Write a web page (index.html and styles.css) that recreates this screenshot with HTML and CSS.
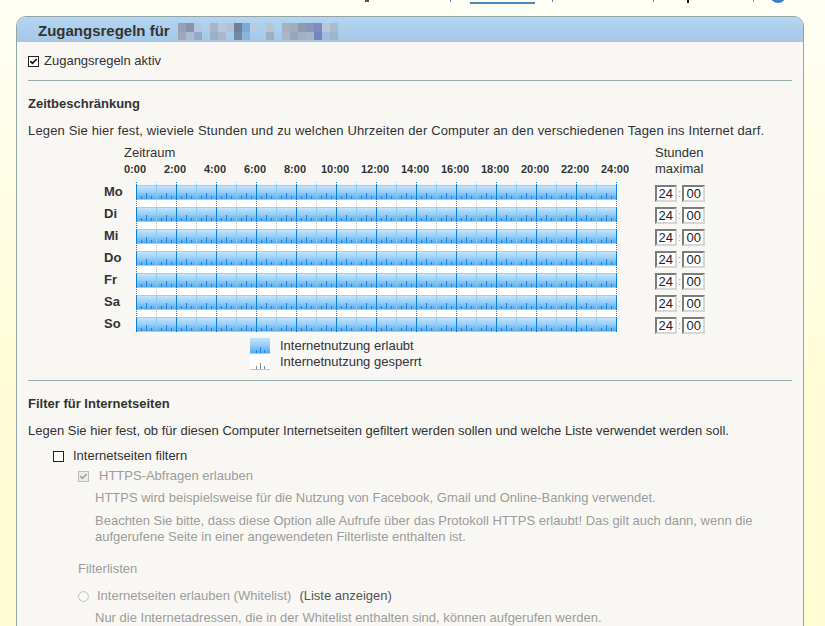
FILE: index.html
```html
<!DOCTYPE html>
<html lang="de">
<head>
<meta charset="utf-8">
<title>Zugangsregeln</title>
<link rel="stylesheet" href="styles.css">
</head>
<body>
<div class="topnav">
  <span class="tn tn-g"></span>
  <span class="tn tn-a"></span>
  <span class="tn tn-ul"></span>
  <span class="tn tn-b"></span>
  <span class="tn tn-c"></span>
  <span class="tn tn-y"></span>
  <span class="tn tn-d"></span>
  <span class="tn tn-circle"></span>
</div>

<div class="panel">
  <div class="panel-head">
    <h1 class="panel-title">Zugangsregeln für</h1>
    <svg class="mosaic" width="168" height="17" viewBox="0 0 168 17" aria-hidden="true">
      <rect x="3" y="0" width="8" height="9" fill="#98a0b4"/>
      <rect x="11" y="0" width="8" height="9" fill="#8a93aa"/>
      <rect x="19" y="0" width="8" height="9" fill="#b2c8e0"/>
      <rect x="35" y="0" width="8" height="9" fill="#a6b6c8"/>
      <rect x="43" y="0" width="8" height="9" fill="#b9c9d9"/>
      <rect x="51" y="0" width="8" height="9" fill="#b0c4d8"/>
      <rect x="59" y="0" width="8" height="9" fill="#6f8098"/>
      <rect x="67" y="0" width="8" height="9" fill="#7ea8d6"/>
      <rect x="75" y="0" width="8" height="9" fill="#b8cce0"/>
      <rect x="91" y="0" width="8" height="9" fill="#b4c6d6"/>
      <rect x="107" y="0" width="8" height="9" fill="#a2b2c2"/>
      <rect x="115" y="0" width="8" height="9" fill="#a0adbc"/>
      <rect x="123" y="0" width="8" height="9" fill="#8e9aae"/>
      <rect x="131" y="0" width="8" height="9" fill="#8a94b8"/>
      <rect x="139" y="0" width="8" height="9" fill="#7d8cc0"/>
      <rect x="147" y="0" width="8" height="9" fill="#b8c8dc"/>
      <rect x="155" y="0" width="8" height="9" fill="#a8bcd0"/>
      <rect x="3" y="9" width="8" height="8" fill="#a0a8b8"/>
      <rect x="11" y="9" width="8" height="8" fill="#b0bccc"/>
      <rect x="19" y="9" width="8" height="8" fill="#92a8cc"/>
      <rect x="35" y="9" width="8" height="8" fill="#9cb0c4"/>
      <rect x="43" y="9" width="8" height="8" fill="#a8b8c8"/>
      <rect x="59" y="9" width="8" height="8" fill="#7488a0"/>
      <rect x="67" y="9" width="8" height="8" fill="#8ab4dc"/>
      <rect x="91" y="9" width="8" height="8" fill="#9cb0c0"/>
      <rect x="107" y="9" width="8" height="8" fill="#a8b8c8"/>
      <rect x="115" y="9" width="8" height="8" fill="#98a8b8"/>
      <rect x="123" y="9" width="8" height="8" fill="#a4b0c0"/>
      <rect x="131" y="9" width="8" height="8" fill="#a8b4c8"/>
      <rect x="139" y="9" width="8" height="8" fill="#7484bc"/>
      <rect x="147" y="9" width="8" height="8" fill="#a4bcd8"/>
      <rect x="155" y="9" width="8" height="8" fill="#9cb4cc"/>
    </svg>
  </div>

  <div class="panel-body">
    <div class="check-row active-row">
      <svg class="cb" width="11" height="11" viewBox="0 0 11 11"><rect x="0.5" y="0.5" width="10" height="10" fill="#fff" stroke="#222"/><path d="M2.3 5.2 L4.4 7.4 L8.7 3" fill="none" stroke="#111" stroke-width="1.7"/></svg>
      <span>Zugangsregeln aktiv</span>
    </div>

    <hr class="sep">

    <h2 class="section-title">Zeitbeschränkung</h2>
    <p class="desc desc-time">Legen Sie hier fest, wieviele Stunden und zu welchen Uhrzeiten der Computer an den verschiedenen Tagen ins Internet darf.</p>

    <div class="schedule">
      <div class="sched-main">
        <div class="zeitraum">Zeitraum</div>
        <div class="hours">
          <span>0:00</span><span>2:00</span><span>4:00</span><span>6:00</span><span>8:00</span><span>10:00</span><span>12:00</span><span>14:00</span><span>16:00</span><span>18:00</span><span>20:00</span><span>22:00</span><span>24:00</span>
        </div>
        <div class="grid-area">
          <div class="days">
            <span>Mo</span><span>Di</span><span>Mi</span><span>Do</span><span>Fr</span><span>Sa</span><span>So</span>
          </div>
          <svg class="timegrid" width="482" height="151" viewBox="0 0 482 151">
            <defs>
              <linearGradient id="blue" x1="0" y1="0" x2="0" y2="1">
                <stop offset="0" stop-color="#c6e4fb"/>
                <stop offset="0.45" stop-color="#9ad0f8"/>
                <stop offset="1" stop-color="#55abef"/>
              </linearGradient>
              <pattern id="row" x="0" y="4" width="40" height="22" patternUnits="userSpaceOnUse">
                <rect x="0" y="0" width="40" height="1" fill="#c4c4c4"/>
                <rect x="0" y="1" width="40" height="13" fill="url(#blue)"/>
                <rect x="0" y="14" width="40" height="1" fill="#c4c4c4"/>
                <rect x="0" y="15" width="40" height="7" fill="#ffffff"/>
                <rect x="1" y="0" width="1" height="15" fill="#0a7fe2"/>
                <rect x="21" y="0" width="1" height="15" fill="#88caf6"/>
                <path d="M6 11h1v3h-1z M11 8h1v6h-1z M16 11h1v3h-1z M26 11h1v3h-1z M31 8h1v6h-1z M36 11h1v3h-1z" fill="#1a86e2"/>
                <path d="M1 16h1v1h-1z M1 18h1v1h-1z M1 20h1v1h-1z" fill="#0a7fe2"/>
                <path d="M21 16h1v1h-1z M21 18h1v1h-1z M21 20h1v1h-1z" fill="#88caf6"/>
              </pattern>
              <pattern id="dots" x="0" y="0" width="40" height="2" patternUnits="userSpaceOnUse">
                <rect x="1" y="1" width="1" height="1" fill="#0a7fe2"/>
                <rect x="21" y="1" width="1" height="1" fill="#88caf6"/>
              </pattern>
            </defs>
            <rect x="1" y="0" width="481" height="4" fill="url(#dots)"/>
            <rect x="1" y="4" width="481" height="147" fill="url(#row)"/>
          </svg>
        </div>
        <div class="legend">
          <div class="legend-row">
            <svg class="swatch" width="20" height="16" viewBox="0 0 20 16"><rect x="0" y="0" width="20" height="15" fill="url(#blue)"/><rect x="0" y="15" width="20" height="1" fill="#c4c4c4"/><path d="M6 12h1v3h-1z M10 9h1v6h-1z M14 12h1v3h-1z" fill="#1a86e2"/></svg>
            <span>Internetnutzung erlaubt</span>
          </div>
          <div class="legend-row">
            <svg class="swatch" width="20" height="16" viewBox="0 0 20 16"><rect x="0" y="0" width="20" height="15" fill="#fff"/><rect x="0" y="15" width="20" height="1" fill="#c4c4c4"/><path d="M6 12h1v3h-1z M10 9h1v6h-1z M14 12h1v3h-1z" fill="#7a8a98"/></svg>
            <span>Internetnutzung gesperrt</span>
          </div>
        </div>
      </div>

      <div class="sched-max">
        <div class="max-head">Stunden<br>maximal</div>
        <div class="max-rows">
          <div class="max-row"><span class="tbox">24</span><span class="colon">:</span><span class="tbox min">00</span></div>
          <div class="max-row"><span class="tbox">24</span><span class="colon">:</span><span class="tbox min">00</span></div>
          <div class="max-row"><span class="tbox">24</span><span class="colon">:</span><span class="tbox min">00</span></div>
          <div class="max-row"><span class="tbox">24</span><span class="colon">:</span><span class="tbox min">00</span></div>
          <div class="max-row"><span class="tbox">24</span><span class="colon">:</span><span class="tbox min">00</span></div>
          <div class="max-row"><span class="tbox">24</span><span class="colon">:</span><span class="tbox min">00</span></div>
          <div class="max-row"><span class="tbox">24</span><span class="colon">:</span><span class="tbox min">00</span></div>
        </div>
      </div>
    </div>

    <hr class="sep sep-legend">

    <h2 class="section-title">Filter für Internetseiten</h2>
    <p class="desc">Legen Sie hier fest, ob für diesen Computer Internetseiten gefiltert werden sollen und welche Liste verwendet werden soll.</p>

    <div class="check-row filter-row">
      <svg class="cb" width="11" height="11" viewBox="0 0 11 11"><rect x="0.5" y="0.5" width="10" height="10" fill="#fff" stroke="#222"/></svg>
      <span>Internetseiten filtern</span>
    </div>
    <div class="check-row https-row disabled">
      <svg class="cb" width="11" height="11" viewBox="0 0 11 11"><rect x="0.5" y="0.5" width="10" height="10" fill="#ececec" stroke="#bcbcbc"/><path d="M2.3 5.2 L4.4 7.4 L8.7 3" fill="none" stroke="#a4a4a4" stroke-width="1.7"/></svg>
      <span>HTTPS-Abfragen erlauben</span>
    </div>
    <p class="note note-first">HTTPS wird beispielsweise für die Nutzung von Facebook, Gmail und Online-Banking verwendet.</p>
    <p class="note note-warn">Beachten Sie bitte, dass diese Option alle Aufrufe über das Protokoll HTTPS erlaubt! Das gilt auch dann, wenn die aufgerufene Seite in einer angewendeten Filterliste enthalten ist.</p>
    <p class="sub">Filterlisten</p>
    <div class="radio-row">
      <svg class="rb" width="11" height="11" viewBox="0 0 11 11"><circle cx="5.5" cy="5.5" r="5" fill="#f2f2f2" stroke="#c4c4c4"/><circle cx="5.5" cy="5.5" r="3.5" fill="#fafafa"/></svg>
      <span class="radio-label">Internetseiten erlauben (Whitelist)</span>
      <span class="list-link">(Liste anzeigen)</span>
    </div>
    <p class="note note-radio">Nur die Internetadressen, die in der Whitelist enthalten sind, können aufgerufen werden.</p>
  </div>
</div>
</body>
</html>
```

FILE: styles.css
```css
* { box-sizing: border-box; }

html {
  background: linear-gradient(#fffff4 0, #fffee6 180px, #fffcd8 380px, #fffbd3 626px);
  min-height: 100%;
}

body {
  margin: 0;
  font-family: "Liberation Sans", Arial, sans-serif;
  font-size: 13px;
  color: #333;
  height: 626px;
  overflow: hidden;
}

/* fragments of the navigation above */
.topnav {
  display: flex;
  align-items: flex-start;
  height: 4px;
  overflow: hidden;
  margin-bottom: 12px;
}
.tn { display: block; flex: none; }
.tn-g { margin-left: 365px; width: 4px; height: 2px; background: #555; }
.tn-a { margin-left: 81px; width: 1px; height: 2px; background: #4d8ad0; }
.tn-ul { margin-left: 19px; margin-top: 2px; width: 65px; height: 2px; background: #4a86c8; }
.tn-b { margin-left: 17px; width: 1px; height: 2px; background: #4d8ad0; }
.tn-c { margin-left: 100px; width: 1px; height: 2px; background: #4d8ad0; }
.tn-y { margin-left: 33px; width: 2px; height: 3px; background: #111; }
.tn-d { margin-left: 64px; width: 1px; height: 2px; background: #4d8ad0; }
.tn-circle { margin-left: 16px; margin-top: -13px; width: 16px; height: 16px; border-radius: 50%; background: #3d7fcc; }

/* panel */
.panel {
  margin-left: 16px;
  width: 788px;
  border: 1px solid #93a6a6;
  border-radius: 10px 10px 0 0;
  background: #f8f7f3;
}

.panel-head {
  display: flex;
  align-items: flex-start;
  height: 25px;
  padding-left: 21px;
  border-radius: 9px 9px 0 0;
  background: linear-gradient(#b4d6f2, #a5c7e7);
}

.panel-title {
  margin: 0;
  padding-top: 2px;
  font-size: 15px;
  font-weight: bold;
  line-height: 23px;
  color: #333;
}

.mosaic { display: block; margin: 6px 0 0 5px; }

.panel-body { padding: 11px 11px 40px; }

.check-row {
  display: flex;
  align-items: center;
  height: 16px;
  line-height: 16px;
}
.cb, .rb { display: block; flex: none; }
.active-row .cb { margin-right: 5px; }

.sep {
  border: 0;
  border-top: 1px solid #92adad;
  height: 0;
  margin: 11px 0 0;
}
.sep-legend { margin-top: 10px; }

.section-title {
  margin: 15px 0 0;
  font-size: 13px;
  font-weight: bold;
  line-height: 16px;
  color: #333;
}

.desc { margin: 11px 0 0; line-height: 16px; }
.desc-time { letter-spacing: 0.15px; }

/* schedule */
.schedule { display: flex; align-items: flex-start; margin: 6px 0 0 76px; }
.sched-main { width: 551px; flex: none; }
.zeitraum { padding-left: 20px; line-height: 16px; }

.hours {
  display: flex;
  margin: 2px 0 0 11px;
  font-size: 11px;
  font-weight: bold;
  line-height: 13px;
}
.hours span { width: 40px; text-align: center; flex: none; }

.grid-area { display: flex; align-items: flex-start; height: 151px; margin-top: 5px; }
.days { width: 31px; height: 151px; flex: none; padding-top: 4px; font-weight: bold; overflow: hidden; }
.days span { display: block; height: 22px; line-height: 14px; }
.timegrid { display: block; }

.legend { margin: 6px 0 0 146px; }
.legend-row {
  display: flex;
  align-items: center;
  gap: 10px;
  height: 16px;
  line-height: 16px;
}
.swatch { display: block; }

.max-head { line-height: 16px; }
.max-rows { margin-top: 8px; }
.max-row { display: flex; align-items: flex-start; height: 22px; }
.tbox {
  display: block;
  width: 22px;
  height: 17px;
  border: 2px solid;
  border-color: #7c7c7c #d6d6d6 #d6d6d6 #7c7c7c;
  background: #fff;
  padding-right: 2px;
  text-align: right;
  font-size: 13px;
  line-height: 13px;
  color: #222;
}
.tbox.min { width: 23px; }
.colon {
  display: block;
  width: 5px;
  text-align: center;
  font-size: 11px;
  line-height: 17px;
  color: #c0a684;
}

/* filter */
.filter-row { margin: 9px 0 0 25px; gap: 9px; }
.https-row { margin: 4px 0 0 50px; gap: 10px; }
.disabled { color: #9c9c9c; }

.note { margin: 0 0 0 67px; line-height: 16px; color: #9c9c9c; }
.note-first { margin-top: 6px; }
.note-warn { margin-top: 7px; }
.note-radio { margin-top: 6px; }

.sub { margin: 16px 0 0 50px; line-height: 16px; color: #9c9c9c; }

.radio-row {
  display: flex;
  align-items: center;
  margin: 11px 0 0 50px;
  height: 16px;
  line-height: 16px;
}
.rb { margin-right: 8px; }
.radio-label { color: #9c9c9c; }
.list-link { margin-left: 8px; color: #555; }
```
